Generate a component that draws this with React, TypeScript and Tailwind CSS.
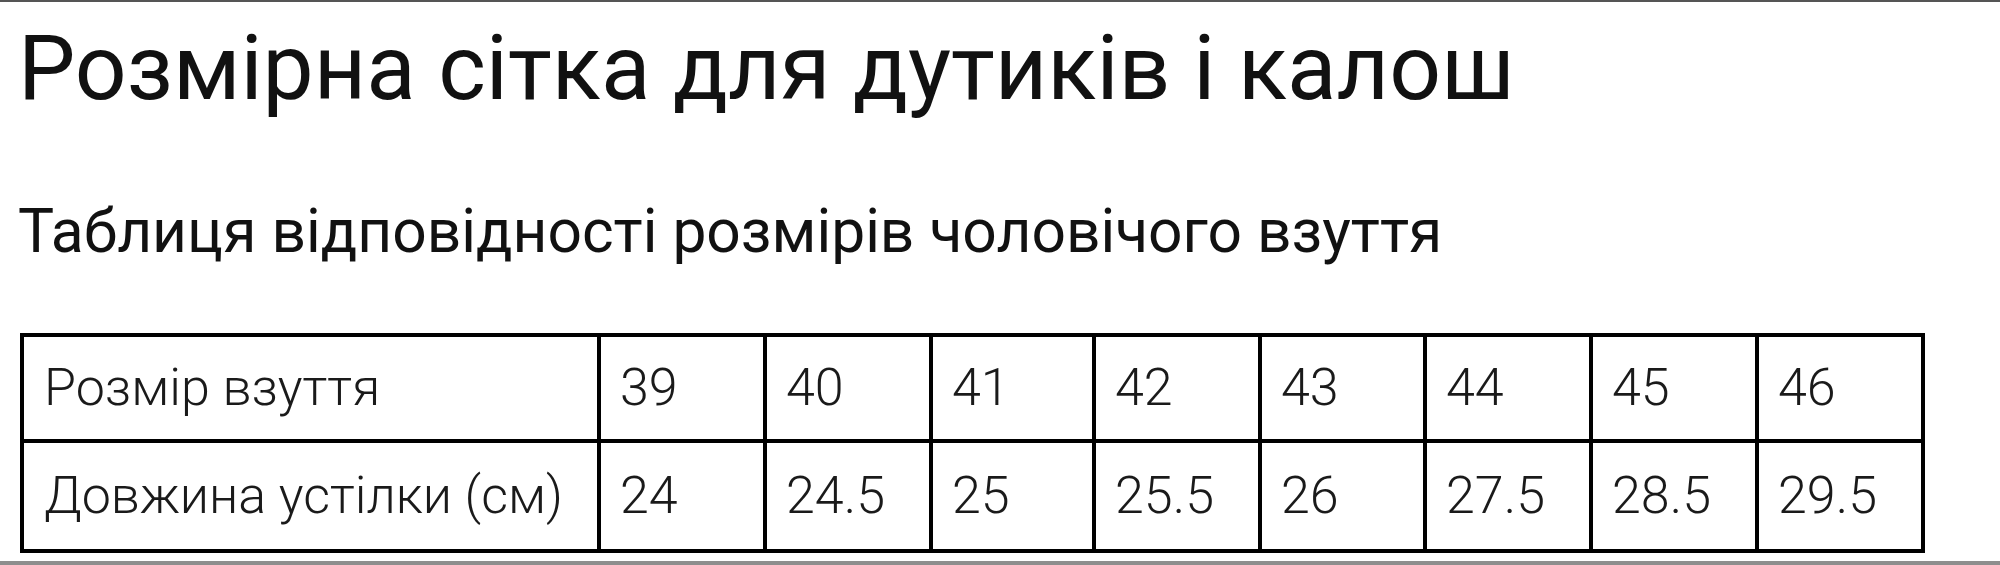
import React from "react";

const sizes = ["39", "40", "41", "42", "43", "44", "45", "46"];
const lengths = ["24", "24.5", "25", "25.5", "26", "27.5", "28.5", "29.5"];
const widths = ["w-[166px]", "w-[166px]", "w-[163px]", "w-[166px]", "w-[165px]", "w-[166px]", "w-[166px]", "w-[166px]"];

export default function App() {
  return (
    <div
      className="h-[565px] w-full bg-white border-t-2 border-t-[#555555] border-b-4 border-b-[#8e8e8e] text-[#111111] overflow-hidden"
      style={{ fontFamily: "Roboto, 'Noto Sans', sans-serif" }}
    >
      <h1 className="mt-[21px] pl-[18px] text-[91px] leading-none font-normal whitespace-nowrap">
        Розмірна сітка для дутиків і калош
      </h1>
      <h2 className="mt-[88px] pl-[18px] text-[60.5px] leading-none font-normal whitespace-nowrap">
        Таблиця відповідності розмірів чоловічого взуття
      </h2>
      <table className="mt-[70px] ml-[20px] border-collapse border-4 border-black text-[52px] font-light text-[#1a1a1a] leading-none">
        <colgroup>
          <col className="w-[577px]" />
          {widths.map((w, i) => (
            <col key={i} className={w} />
          ))}
        </colgroup>
        <tbody>
          <tr className="h-[106px]">
            <td className="border-4 border-black pl-[20px] pr-2 whitespace-nowrap">Розмір взуття</td>
            {sizes.map((s) => (
              <td key={s} className="border-4 border-black pl-[19px] pr-2">
                {s}
              </td>
            ))}
          </tr>
          <tr className="h-[110px]">
            <td className="border-4 border-black pl-[20px] pr-2 whitespace-nowrap">Довжина устілки (см)</td>
            {lengths.map((l) => (
              <td key={l} className="border-4 border-black pl-[19px] pr-2">
                {l}
              </td>
            ))}
          </tr>
        </tbody>
      </table>
    </div>
  );
}
